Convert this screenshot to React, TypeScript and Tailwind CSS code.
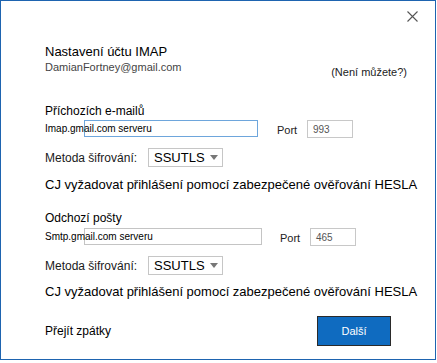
import React from "react";

const font = { fontFamily: '"Liberation Sans", Arial, sans-serif' };

function ServerRow({ label, width, portLeft, port, focused }: { label: string; width: string; portLeft: string; port: string; focused?: boolean }) {
  return (
    <div className="relative flex h-[17px] items-center">
      <div
        className={
          "absolute left-[39px] top-0 h-[17px] " +
          width +
          (focused ? " border border-[#6ea6dc]" : " border border-[#c4c4c4]")
        }
      />
      <span className="relative text-[10px] leading-none text-black">{label}</span>
      <span className={"absolute top-[2px] text-[11px] text-[#222] " + portLeft}>Port</span>
      <div
        className={
          "absolute top-0 flex h-[18px] w-[46px] items-center border border-[#c8c8c8] pl-[5px] text-[10px] text-[#555] " +
          (port === "993" ? "left-[262px]" : "left-[265px]")
        }
      >
        {port}
      </div>
    </div>
  );
}

function MethodRow() {
  return (
    <div className="flex h-[19px] items-center">
      <span className="w-[103px] text-[12px] text-[#1a1a1a]">Metoda šifrování:</span>
      <div className="flex h-[19px] w-[75px] items-center justify-between border border-[#c6c6c6] pl-[5px] pr-[4px]">
        <span className="text-[13px] text-black">SSUTLS</span>
        <svg width="8" height="5" viewBox="0 0 8 5">
          <path d="M0 0 L8 0 L4 5 Z" fill="#777" />
        </svg>
      </div>
    </div>
  );
}

export default function App() {
  return (
    <div className="h-[363px] w-[437px] bg-white" style={font}>
      <div className="relative flex h-[360px] w-[436px] flex-col border border-[#1e64b0] pl-[44px] pr-[28px]">
        <svg className="absolute right-[17px] top-[10px]" width="11" height="11" viewBox="0 0 11 11">
          <path d="M0.5 0.5 L10.5 10.5 M10.5 0.5 L0.5 10.5" stroke="#555" strokeWidth="1.1" />
        </svg>

        <div className="mt-[43px] text-[13px] leading-[16px] text-black">Nastavení účtu IMAP</div>
        <div className="flex justify-between">
          <span className="text-[11px] leading-[14px] text-[#444]">DamianFortney@gmail.com</span>
          <span className="pt-[5px] text-[11px] leading-[14px] text-[#222]">(Není můžete?)</span>
        </div>

        <div className="mt-[25px] text-[12px] leading-[15px] text-black">Příchozích e-mailů</div>
        <div className="mt-[1px]">
          <ServerRow label="Imap.gmail.com serveru" width="w-[174px]" portLeft="left-[232px]" port="993" focused />
        </div>
        <div className="mt-[11px]">
          <MethodRow />
        </div>
        <div className="mt-[9px] whitespace-nowrap text-[13px] leading-[18px] text-black">
          CJ vyžadovat přihlášení pomocí zabezpečené ověřování HESLA
        </div>

        <div className="mt-[17px] text-[12px] leading-[15px] text-black">Odchozí pošty</div>
        <div className="mt-[2px]">
          <ServerRow label="Smtp.gmail.com serveru" width="w-[178px]" portLeft="left-[235px]" port="465" />
        </div>
        <div className="mt-[11px]">
          <MethodRow />
        </div>
        <div className="mt-[8px] whitespace-nowrap text-[13px] leading-[18px] text-black">
          CJ vyžadovat přihlášení pomocí zabezpečené ověřování HESLA
        </div>

        <div className="mt-[15px] flex items-center justify-between pr-[16px]">
          <span className="text-[12px] text-black">Přejít zpátky</span>
          <button className="h-[30px] w-[74px] border border-[#2a2a2a] bg-[#0f6bc0] text-[11px] text-white">Další</button>
        </div>
      </div>
    </div>
  );
}
